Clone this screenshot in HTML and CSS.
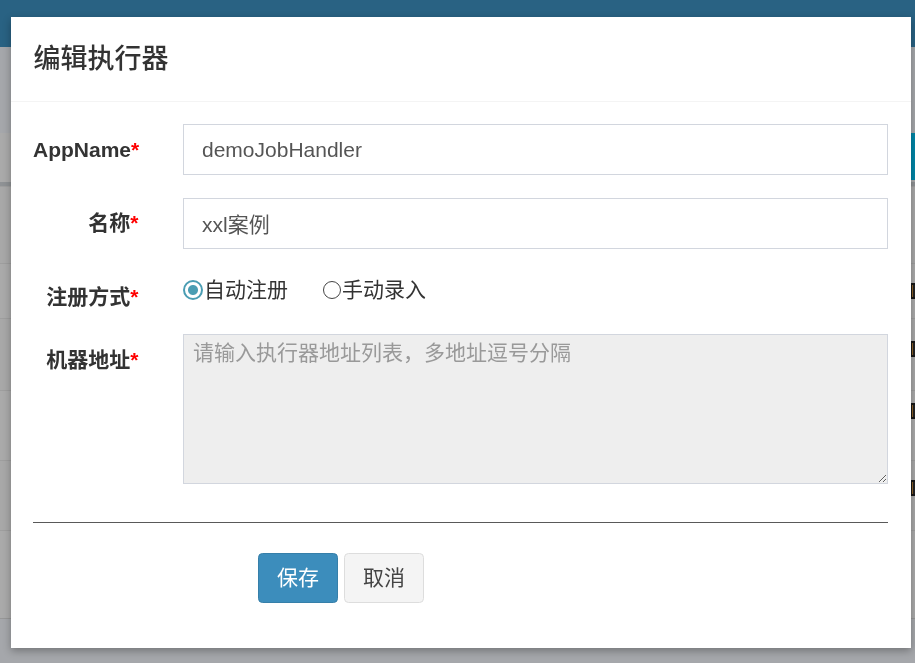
FILE: index.html
```html
<!DOCTYPE html>
<html lang="zh-CN">
<head>
<meta charset="utf-8">
<title>编辑执行器</title>
<link rel="stylesheet" href="styles.css">
</head>
<body>
<div class="page">
  <div class="navbar"></div>
  <div class="content">
    <div class="box">
      <div class="box-tools"><span class="btn-info"></span></div>
      <div class="table-head"></div>
      <div class="row r1"></div>
      <div class="row r2"><span class="edge-mark"></span></div>
      <div class="row r3"><span class="edge-mark"></span></div>
      <div class="row r4"><span class="edge-mark"></span></div>
      <div class="row r5"><span class="edge-mark"></span></div>
      <div class="row r6"></div>
    </div>
  </div>
</div>
<div class="backdrop"></div>
<div class="modal">
  <div class="modal-header">
    <h4 class="modal-title">编辑执行器</h4>
  </div>
  <div class="modal-body">
    <form class="form">
      <div class="form-group">
        <label class="control-label">AppName<span class="req">*</span></label>
        <div class="field"><input class="form-control" type="text" value="demoJobHandler"></div>
      </div>
      <div class="form-group">
        <label class="control-label">名称<span class="req">*</span></label>
        <div class="field"><input class="form-control" type="text" value="xxl案例"></div>
      </div>
      <div class="form-group">
        <label class="control-label">注册方式<span class="req">*</span></label>
        <div class="field radios">
          <label class="radio-opt"><input type="radio" name="addressType" checked><span>自动注册</span></label>
          <label class="radio-opt"><input type="radio" name="addressType"><span>手动录入</span></label>
        </div>
      </div>
      <div class="form-group">
        <label class="control-label">机器地址<span class="req">*</span></label>
        <div class="field"><textarea class="form-control area" readonly placeholder="请输入执行器地址列表，多地址逗号分隔"></textarea></div>
      </div>
      <hr class="divider">
      <div class="actions">
        <button type="button" class="btn btn-primary">保存</button>
        <button type="button" class="btn btn-default">取消</button>
      </div>
    </form>
  </div>
</div>
</body>
</html>
```
FILE: styles.css
```css
html, body {
  margin: 0;
  padding: 0;
  height: 100%;
  overflow: hidden;
}
body {
  background: #ecf0f5;
  font-family: "Liberation Sans", "Noto Sans CJK SC", sans-serif;
  color: #333;
}
.page {
  display: flex;
  flex-direction: column;
  height: 100%;
}
.navbar {
  height: 47px;
  background: #3c8dbc;
  flex: none;
}
.content {
  padding-top: 86px;
}
.box {
  display: flex;
  flex-direction: column;
  height: 486px;
  background: #f4f4f4;
}
.box-tools {
  height: 49px;
  background: #f4f4f4;
  display: flex;
  justify-content: flex-end;
}
.btn-info {
  display: block;
  width: 60px;
  height: 47px;
  margin-right: -56px;
  background: #00c0ef;
}
.table-head {
  height: 4px;
  background: #cdd1d6;
}
.row {
  box-sizing: border-box;
  border-top: 1px solid #e2e2e2;
  background: #f4f4f4;
  display: flex;
  justify-content: flex-end;
  align-items: flex-start;
  overflow: hidden;
}
.row:nth-child(odd) { background: #f1f1f1; }
.r1 { height: 77px; }
.r2 { height: 55px; padding-top: 19px; }
.r3 { height: 72px; padding-top: 22px; }
.r4 { height: 70px; padding-top: 12px; }
.r5 { height: 70px; padding-top: 19px; }
.r6 { flex: 1; border-bottom: 1px solid #d8d8d8; }
.edge-mark {
  display: block;
  width: 4px;
  height: 16px;
  box-sizing: border-box;
  border-left: 1.5px solid #222;
  border-top: 2px solid #222;
  border-bottom: 2px solid #222;
  background: linear-gradient(90deg, #c88a3a 0 50%, #333 50%);
}
.backdrop {
  position: fixed;
  inset: 0;
  background: rgba(0, 0, 0, 0.3);
}
.modal {
  position: absolute;
  left: 11px;
  top: 17px;
  width: 900px;
  background: #fff;
  box-shadow: 0 3px 8px rgba(0, 0, 0, 0.3);
}
.modal-header {
  padding: 22.5px;
  border-bottom: 1px solid #f4f4f4;
}
.modal-title {
  margin: 0;
  font-size: 27px;
  font-weight: 500;
  line-height: 1.42857;
  color: #333;
}
.modal-body {
  padding: 22.5px 23px 22.5px 22px;
}
.form {
  margin: 0;
}
.form-group {
  display: flex;
  margin: 0 -23px 22.5px -22px;
  align-items: flex-start;
}
.control-label {
  box-sizing: border-box;
  width: 150px;
  flex: none;
  padding: 10.5px 22.5px 0 22px;
  text-align: right;
  font-weight: 700;
  font-size: 21px;
  line-height: 30px;
  color: #333;
}
.req {
  color: #f00;
}
.field {
  box-sizing: border-box;
  flex: 1;
  padding: 0 23px 0 22px;
}
.form-control {
  box-sizing: border-box;
  display: block;
  width: 100%;
  height: 51px;
  padding: 9px 18px;
  font-family: "Liberation Sans", "Noto Sans CJK SC", sans-serif;
  font-size: 21px;
  line-height: 30px;
  color: #555;
  background: #fff;
  border: 1px solid #d2d6de;
  border-radius: 0;
  outline: none;
  margin: 0;
}
.area {
  height: 150px;
  padding: 4px 9px;
  line-height: 28px;
  background: #eee;
  resize: vertical;
}
.area::placeholder {
  color: #999;
}
.radios {
  display: flex;
  gap: 34px;
  padding-top: 4px;
}
.radio-opt {
  display: inline-flex;
  align-items: center;
  font-size: 21px;
  line-height: 30px;
  color: #333;
}
.radio-opt input {
  appearance: none;
  -webkit-appearance: none;
  box-sizing: border-box;
  width: 18px;
  height: 18px;
  margin: 0 1px 0 1px;
  border-radius: 50%;
  border: 1.5px solid #444;
  background: #fff;
}
.radio-opt input:checked {
  width: 20px;
  height: 20px;
  margin-left: 0;
  border: 2.5px solid #4a9db3;
  background: radial-gradient(circle, #4a9db3 0 4.5px, #fff 5.5px);
}
.divider {
  margin: 37.5px 0 30px;
  border: 0;
  border-top: 1px solid #595959;
  height: 0;
}
.actions {
  display: flex;
  gap: 6px;
  margin-left: 225px;
  margin-bottom: 22.5px;
}
.btn {
  box-sizing: border-box;
  height: 50px;
  padding: 9px 18px;
  font-family: "Liberation Sans", "Noto Sans CJK SC", sans-serif;
  font-size: 21px;
  line-height: 30px;
  border: 1px solid transparent;
  border-radius: 4.5px;
  cursor: pointer;
}
.btn-primary {
  background: #3c8dbc;
  border-color: #367fa9;
  color: #fff;
}
.btn-default {
  background: #f4f4f4;
  border-color: #ddd;
  color: #444;
}
```
